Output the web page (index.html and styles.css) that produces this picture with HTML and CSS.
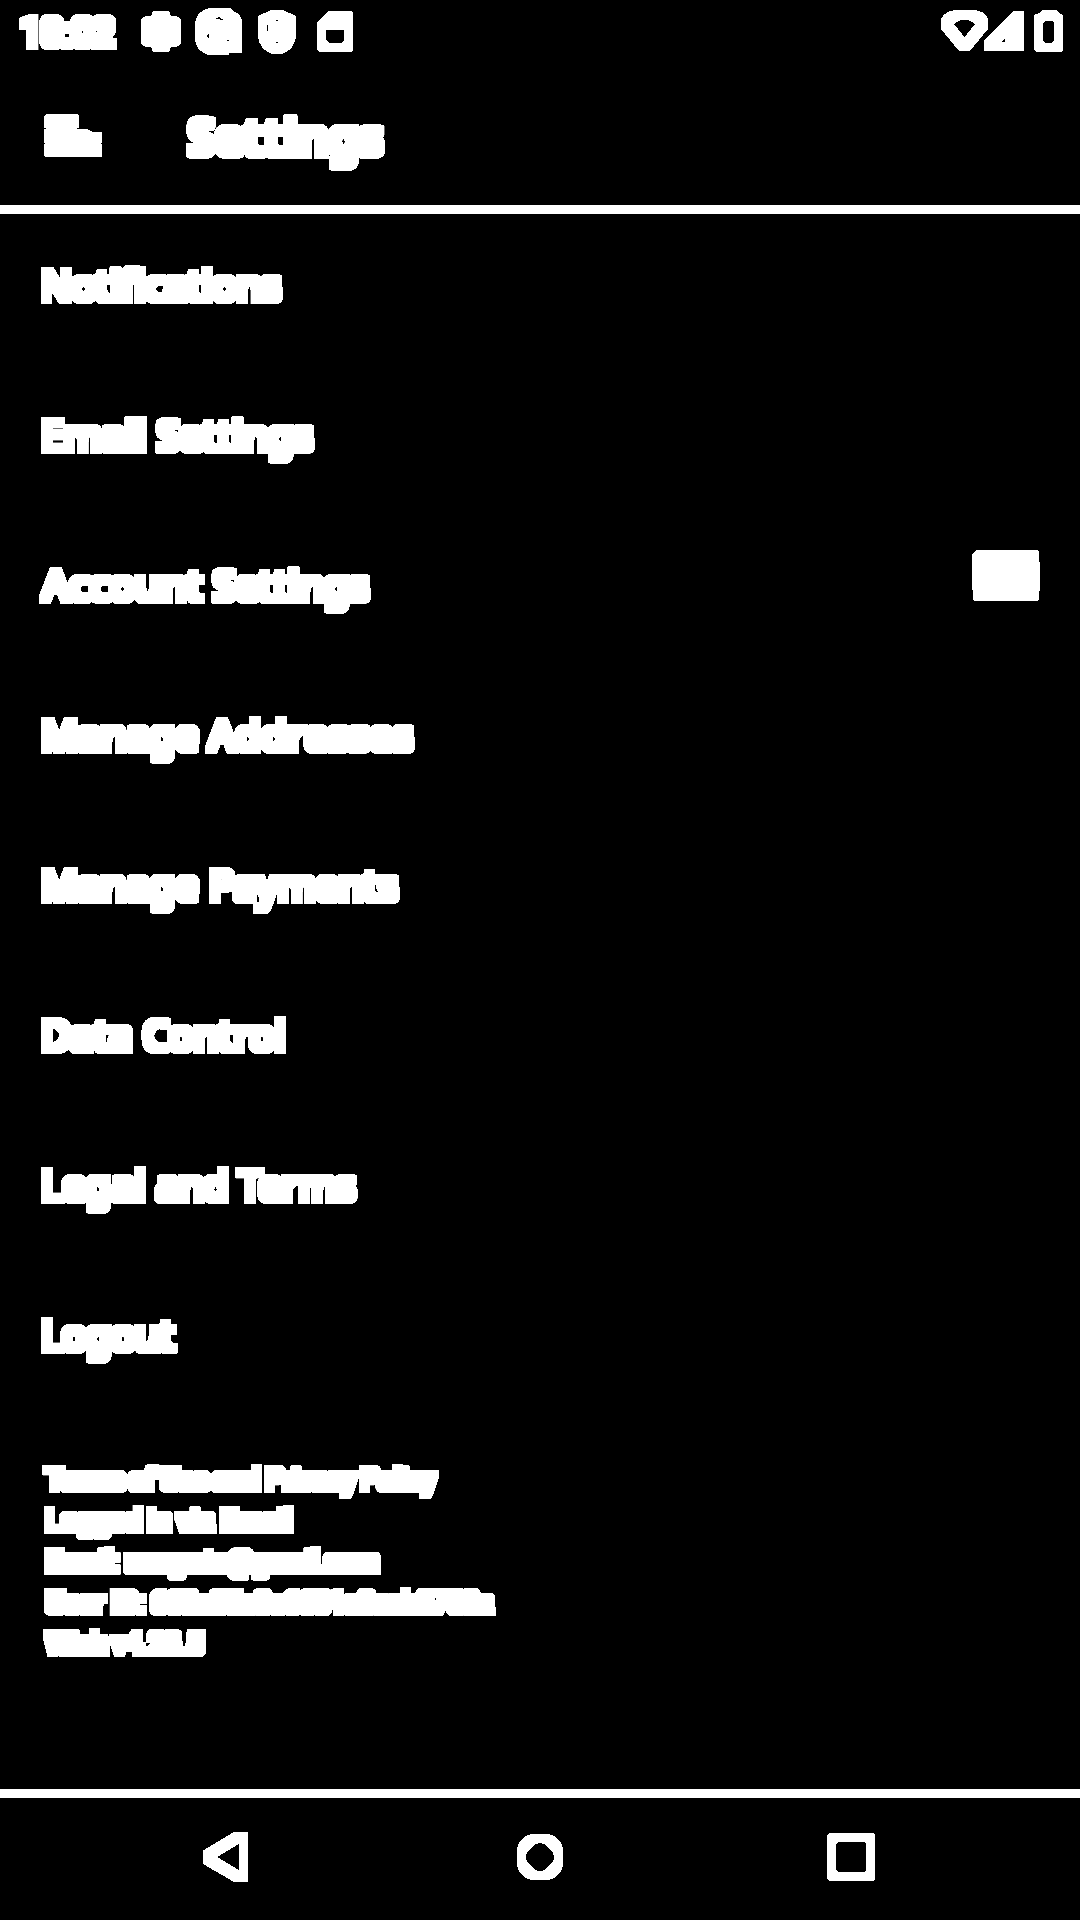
FILE: index.html
```html
<!DOCTYPE html>
<html lang="en">
<head>
<meta charset="utf-8">
<title>Settings</title>
<link rel="stylesheet" href="styles.css">
</head>
<body>
<svg class="defs" width="0" height="0" aria-hidden="true">
  <filter id="thick" x="-20" y="-20" width="1100" height="120" filterUnits="userSpaceOnUse" color-interpolation-filters="sRGB">
    <feComponentTransfer><feFuncA type="linear" slope="30" intercept="-9"/></feComponentTransfer>
    <feMorphology operator="dilate" radius="4"/>
  </filter>
</svg>
<div class="screen">
  <div class="status">
    <span class="time thick">10:02</span>
    <svg class="gear" width="40" height="42" viewBox="141 11 40 42"><path d="M153 11H169L171 16H176Q181 17 181 22V41Q181 46 176 47H171L169 52H153L151 47H146Q141 46 141 41V22Q141 17 146 16H151Z"/></svg>
    <svg class="at" width="47" height="47" viewBox="195 8 47 47"><path fill-rule="evenodd" d="M210 8H230L235 12Q242 15 242 22V53H229V55H208Q195 50 195 38V24Q196 11 210 8ZM215 19L219 17 224 20ZM206 36L209 33V39ZM227 40h2v1h-2Z"/></svg>
    <svg class="shield" width="38" height="44" viewBox="258 10 38 44"><path fill-rule="evenodd" d="M258 16L271 10H283L296 16V37Q294 50 282 54H272Q260 50 258 37ZM267 25V31H268V25ZM276 20h2v1h-2ZM276 42h2v1h-2Z"/></svg>
    <svg class="card" width="36" height="41" viewBox="317 11 36 41"><path fill-rule="evenodd" d="M328 11H351L353 13V50L351 52H319L317 50V22ZM326 30V40L329 43H341L344 40V30Z"/></svg>
    <svg class="wifi" width="83" height="42" viewBox="941 10 83 42"><path fill-rule="evenodd" d="M941 19Q945 10 958 10H971Q985 10 988 19V29L970 51H959L941 29ZM954 24L964.500 37 975 24Q964.500 15 954 24Z"/><path fill-rule="evenodd" d="M984 51V41L1013 11H1024V51ZM1001 42H1005V38Z"/></svg>
    <svg class="battery" width="29" height="42" viewBox="1034 10 29 42"><path fill-rule="evenodd" d="M1042 10H1056L1059 13 1063 15V50L1061 52H1036L1034 50V15L1039 13ZM1045 21L1043 23V40L1045 43H1052L1054 40V23L1052 21Z"/></svg>
  </div>
  <div class="header">
    <svg class="menu" width="58" height="43" viewBox="44 114 58 43"><path d="M46 114H77L79 116V128H77V129H87L93 132H102V143H101V144H102V157H45L44 156V144H45V143H44V129H46V128H44V116Z"/></svg>
    <h1 class="thick">Settings</h1>
  </div>
  <div class="list">
    <div class="row"><span class="thick t1">Notifications</span></div>
    <div class="row"><span class="thick"><span class="t4">Email</span> <span class="t3">Settings</span></span></div>
    <div class="row"><span class="thick inset"><span class="t6">Account</span> <span class="t3">Settings</span></span><svg class="badge" width="68" height="51" viewBox="0 0 68 51"><path d="M5 0H64L67 1V12L68 13V40L67 41V50L65 51H3L1 50V41L0 40V4Z"/></svg></div>
    <div class="row"><span class="thick"><span class="t5">Manage</span> <span class="t7">Addresses</span></span></div>
    <div class="row"><span class="thick"><span class="t5">Manage</span> <span class="t3">Payments</span></span></div>
    <div class="row"><span class="thick"><span class="t5">Data</span> <span class="t3">Control</span></span></div>
    <div class="row"><span class="thick"><span class="t5">Legal</span> <span class="t2">and Terms</span></span></div>
    <div class="row"><span class="thick">Logout</span></div>
  </div>
  <div class="about">
    <div class="thick line1">Terms of Use and Privacy Policy</div>
    <div class="thick t3">Logged in via Email</div>
    <div class="thick tight">Email: uangwto@gmail.com</div>
    <div class="thick"><span class="t3">User ID:</span> <span class="snug">663e85c8e6601c8eab8768a</span></div>
    <div class="thick line1">Wish v4.28.5</div>
  </div>
  <div class="nav">
    <svg width="45" height="50" viewBox="203 1832 45 50"><path fill-rule="evenodd" d="M203 1850.500L234 1832H247L248 1833V1881L247 1882H234L203 1864ZM217 1857L239 1870V1844Z"/></svg>
    <svg width="46" height="46" viewBox="517 1834 46 46"><path fill-rule="evenodd" d="M531 1834H549Q560 1837 563 1848V1866Q560 1877 549 1880H531Q520 1877 517 1866V1848Q520 1837 531 1834ZM540 1843Q536 1843 531 1848Q526 1853 526 1857Q526 1861 531 1866Q536 1871 540 1871Q544 1871 549 1866Q554 1861 554 1857Q554 1853 549 1848Q544 1843 540 1843Z"/></svg>
    <svg width="48" height="48" viewBox="827 1833 48 48"><path fill-rule="evenodd" d="M829 1833H873L875 1835V1879L873 1881H829L827 1879V1835ZM838 1842L836 1844V1870L838 1872H864L866 1870V1844L864 1842Z"/></svg>
  </div>
</div>
</body>
</html>
```
FILE: styles.css
```css
* { box-sizing: border-box; }
body { margin: 0; background: #000; color: #fff; }
svg { display: block; fill: #fff; flex: none; shape-rendering: crispEdges; }
.defs { position: absolute; }
.screen { width: 1080px; height: 1920px; display: flex; flex-direction: column; overflow: hidden; background: #000; }
.thick { filter: url(#thick); white-space: nowrap; }
.status { height: 66px; display: flex; align-items: flex-start; padding: 0 17px 0 20px; }
.time { width: 121px; padding-top: 11px; font: 500 38px/44px Roboto, sans-serif; letter-spacing: -0.5px; }
.gear { margin-top: 11px; }
.at { margin: 8px 0 0 14px; }
.shield { margin: 10px 0 0 16px; }
.card { margin: 11px 0 0 21px; }
.wifi { margin: 10px 0 0 auto; }
.battery { margin: 10px 0 0 10px; }
.header { height: 148px; display: flex; align-items: flex-start; padding: 48px 44px 0; border-bottom: 9px solid #fff; }
h1 { margin: -10px 0 0 86px; font: 600 48px/66px "Noto Sans", sans-serif; letter-spacing: 0.5px; }
.row { height: 150px; padding: 44px 40px 0 41px; display: flex; justify-content: space-between; align-items: flex-start; font: 400 40px/54px "Noto Sans", sans-serif; }
.inset { margin-left: 2px; }
.badge { margin-top: -8px; }
.t1 { letter-spacing: 0.15px; }
.t2 { letter-spacing: 0.2px; }
.t3 { letter-spacing: 0.45px; }
.t4 { letter-spacing: 0.6px; }
.t5 { letter-spacing: 0.8px; }
.t6 { letter-spacing: 1.1px; }
.t7 { letter-spacing: 1.3px; }
.tight { letter-spacing: -0.7px; word-spacing: 1px; }
.snug { letter-spacing: -0.65px; }
.about { padding: 45px 46px; font: 400 28px/41px Roboto, sans-serif; word-spacing: -1px; }
.line1 { letter-spacing: -0.15px; }
.nav { margin-top: auto; height: 131px; border-top: 9px solid #fff; display: grid; grid-template-columns: 314px 310px 48px; padding: 0 0 4px 203px; align-items: center; }
```
